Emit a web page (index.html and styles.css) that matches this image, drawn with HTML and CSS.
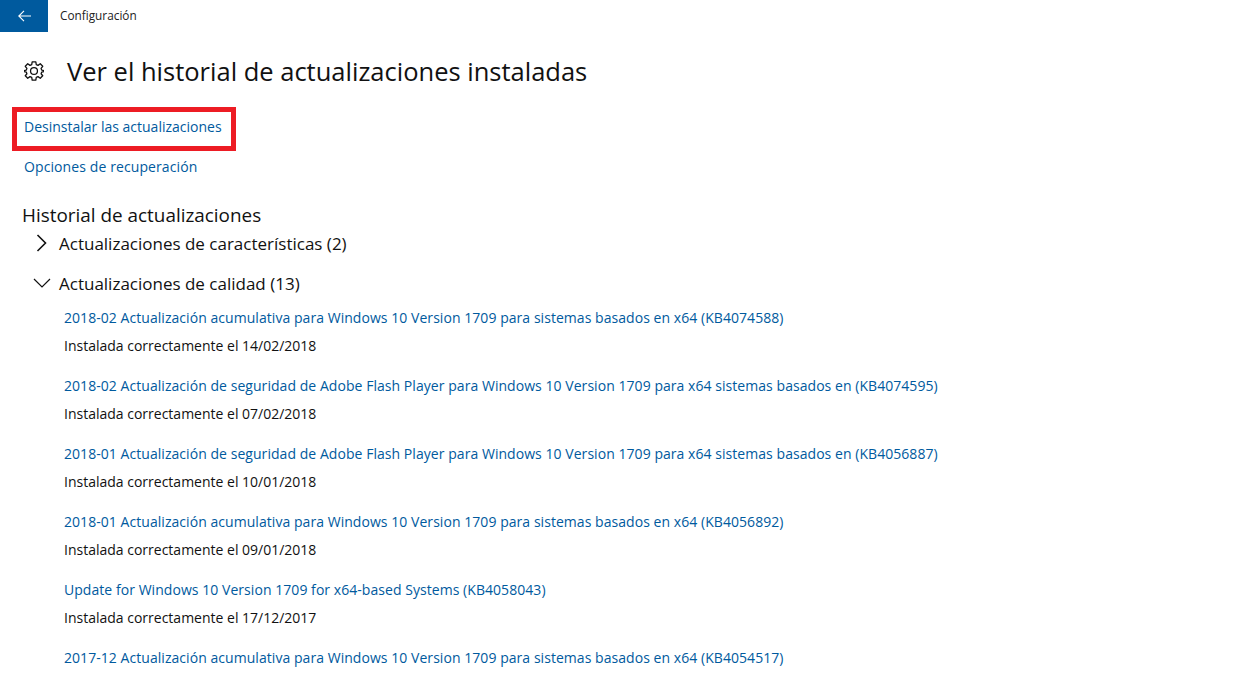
FILE: index.html
```html
<!DOCTYPE html>
<html lang="es">
<head>
    <meta charset="UTF-8">
    <title>Configuración</title>
    <link rel="stylesheet" href="styles.css">
</head>
<body>
    <div class="topbar">
        <div class="back-button">
            <svg width="13" height="12" viewBox="0 0 13 12" fill="none" stroke="#fff" stroke-width="1.1"><path d="M0.8 6H13M6 0.8L0.8 6L6 11.2"/></svg>
        </div>
        <span class="app-name">Configuración</span>
    </div>

    <div class="page-title">
        <svg class="gear" width="20" height="20" viewBox="0 0 22 22" fill="none" stroke="#111" stroke-width="1.4" stroke-linejoin="round">
            <path d="M9 1H13L13.5 4L15.4 4.8L17.9 3L20.6 5.8L18.8 8.2L19.5 10L22 10.6V11.6L19.5 12.2L18.8 14L20.6 16.2L17.9 19L15.4 17.2L13.5 18L13 21H9L8.5 18L6.6 17.2L4.1 19L1.4 16.2L3.2 14L2.5 12.2L0 11.6V10.6L2.5 10L3.2 8.2L1.4 5.8L4.1 3L6.6 4.8L8.5 4Z"/>
            <circle cx="11" cy="11" r="3.8"/>
        </svg>
        <h1>Ver el historial de actualizaciones instaladas</h1>
    </div>

    <div class="marked-link"><a href="#">Desinstalar las actualizaciones</a></div>
    <div class="plain-link"><a href="#">Opciones de recuperación</a></div>

    <h2>Historial de actualizaciones</h2>

    <div class="group">
        <svg width="16" height="18" viewBox="0 0 16 18" fill="none" stroke="#111" stroke-width="1.6"><path d="M3.5 1L11.5 9L3.5 17"/></svg>
        <span>Actualizaciones de características (2)</span>
    </div>
    <div class="group group-open">
        <svg width="18" height="10" viewBox="0 0 18 10" fill="none" stroke="#111" stroke-width="1.2"><path d="M1 1L9 9L17 1"/></svg>
        <span>Actualizaciones de calidad (13)</span>
    </div>

    <ul class="updates">
        <li><a href="#">2018-02 Actualización acumulativa para Windows 10 Version 1709 para sistemas basados en x64 (KB4074588)</a><p>Instalada correctamente el 14/02/2018</p></li>
        <li><a href="#">2018-02 Actualización de seguridad de Adobe Flash Player para Windows 10 Version 1709 para x64 sistemas basados en (KB4074595)</a><p>Instalada correctamente el 07/02/2018</p></li>
        <li><a href="#">2018-01 Actualización de seguridad de Adobe Flash Player para Windows 10 Version 1709 para x64 sistemas basados en (KB4056887)</a><p>Instalada correctamente el 10/01/2018</p></li>
        <li><a href="#">2018-01 Actualización acumulativa para Windows 10 Version 1709 para sistemas basados en x64 (KB4056892)</a><p>Instalada correctamente el 09/01/2018</p></li>
        <li><a href="#">Update for Windows 10 Version 1709 for x64-based Systems (KB4058043)</a><p>Instalada correctamente el 17/12/2017</p></li>
        <li><a href="#">2017-12 Actualización acumulativa para Windows 10 Version 1709 para sistemas basados en x64 (KB4054517)</a></li>
    </ul>
</body>
</html>
```

FILE: styles.css
```css
html, body { height: 100%; }
body { margin: 0; background: #fff; color: #111; font-family: "Open Sans", "Noto Sans", sans-serif; font-size: 14px; overflow: hidden; }
a { color: #005a9e; text-decoration: none; }

.topbar { display: flex; align-items: center; height: 32px; }
.back-button { display: flex; align-items: center; justify-content: center; width: 48px; height: 32px; background: #005a9e; }
.app-name { margin: -3px 0 0 12px; font-size: 11.8px; color: #222; }

.page-title { display: flex; align-items: center; height: 40px; margin-top: 19px; padding-left: 24px; }
.page-title h1 { margin: 0 0 0 23px; font-size: 25.5px; font-weight: 400; }

.marked-link { width: 214px; height: 34px; margin: 16px 0 0 12px; border: 5px solid #ed1c24; line-height: 30px; }
.marked-link a { margin-left: 7px; }
.plain-link { margin: 3px 0 0 24px; line-height: 26px; letter-spacing: 0.1px; }

h2 { margin: 22px 0 0 22px; font-size: 18.9px; font-weight: 400; line-height: 26px; }

.group { display: flex; align-items: center; height: 30px; padding-left: 34px; font-size: 17px; }
.group span { margin-left: 9px; }
.group-open { margin-top: 10px; padding-left: 33px; }
.group-open span { margin-left: 8px; }

.updates { list-style: none; margin: 0; padding: 6px 0 0 64px; }
.updates li { height: 68px; white-space: nowrap; }
.updates li:last-child { height: 28px; }
.updates a { display: block; line-height: 28px; letter-spacing: 0.05px; }
.updates p { margin: 0; line-height: 28px; }
```
